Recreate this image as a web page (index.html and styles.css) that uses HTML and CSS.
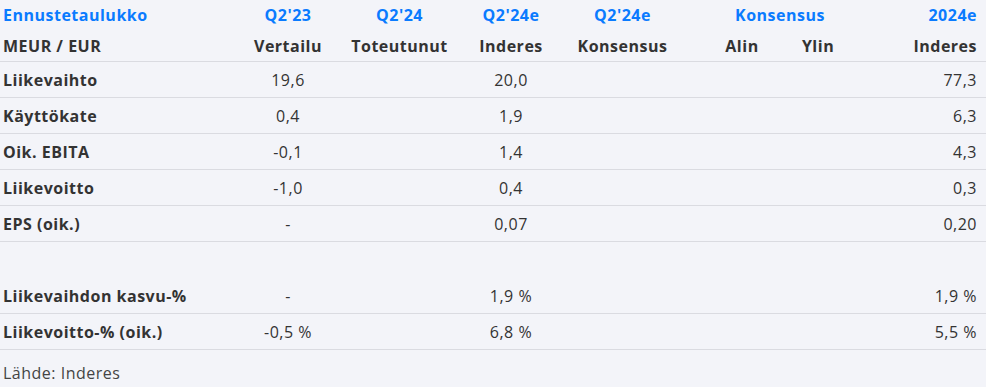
FILE: index.html
```html
<!DOCTYPE html>
<html lang="fi">
<head>
<meta charset="utf-8">
<link rel="stylesheet" href="styles.css">
</head>
<body>
<table class="fc">
  <colgroup>
    <col class="c-label"><col class="c-num"><col class="c-num2"><col class="c-num"><col class="c-num2"><col class="c-gap"><col class="c-cons"><col class="c-cons"><col class="c-last">
  </colgroup>
  <thead>
    <tr class="h1">
      <th class="lbl">Ennustetaulukko</th>
      <th>Q2'23</th>
      <th>Q2'24</th>
      <th>Q2'24e</th>
      <th>Q2'24e</th>
      <th></th>
      <th colspan="2">Konsensus</th>
      <th class="last">2024e</th>
    </tr>
    <tr class="h2">
      <th class="lbl">MEUR / EUR</th>
      <th>Vertailu</th>
      <th>Toteutunut</th>
      <th>Inderes</th>
      <th>Konsensus</th>
      <th></th>
      <th>Alin</th>
      <th>Ylin</th>
      <th class="last">Inderes</th>
    </tr>
  </thead>
  <tbody>
    <tr><td class="lbl">Liikevaihto</td><td>19,6</td><td></td><td>20,0</td><td></td><td></td><td></td><td></td><td class="last">77,3</td></tr>
    <tr><td class="lbl">Käyttökate</td><td>0,4</td><td></td><td>1,9</td><td></td><td></td><td></td><td></td><td class="last">6,3</td></tr>
    <tr><td class="lbl">Oik. EBITA</td><td>-0,1</td><td></td><td>1,4</td><td></td><td></td><td></td><td></td><td class="last">4,3</td></tr>
    <tr><td class="lbl">Liikevoitto</td><td>-1,0</td><td></td><td>0,4</td><td></td><td></td><td></td><td></td><td class="last">0,3</td></tr>
    <tr><td class="lbl">EPS (oik.)</td><td>-</td><td></td><td>0,07</td><td></td><td></td><td></td><td></td><td class="last">0,20</td></tr>
    <tr class="spacer"><td colspan="9"></td></tr>
    <tr><td class="lbl">Liikevaihdon kasvu-%</td><td>-</td><td></td><td>1,9 %</td><td></td><td></td><td></td><td></td><td class="last">1,9 %</td></tr>
    <tr><td class="lbl">Liikevoitto-% (oik.)</td><td>-0,5 %</td><td></td><td>6,8 %</td><td></td><td></td><td></td><td></td><td class="last">5,5 %</td></tr>
  </tbody>
</table>
<p class="source">Lähde: Inderes</p>
</body>
</html>
```
FILE: styles.css
```css
html, body {
  margin: 0;
  padding: 0;
  background: #f3f4f9;
}
body {
  width: 986px;
  height: 387px;
  overflow: hidden;
  font-family: "Open Sans", "Liberation Sans", sans-serif;
  font-size: 16px;
  letter-spacing: 0.5px;
  color: #333333;
}
.fc {
  width: 986px;
  border-collapse: collapse;
  table-layout: fixed;
}
.c-label { width: 232px; }
.c-num { width: 112px; }
.c-num2 { width: 111px; }
.c-gap { width: 26px; }
.c-cons { width: 76px; }
.c-last { width: auto; }
.fc th, .fc td {
  padding: 0;
  text-align: center;
  white-space: nowrap;
  line-height: 20px;
}
.fc th {
  font-weight: 700;
}
.fc .lbl {
  text-align: left;
  padding-left: 3px;
  font-weight: 700;
}
.fc .last {
  text-align: right;
  padding-right: 9px;
}
.h1 th {
  color: #0a7bff;
  height: 30px;
  vertical-align: middle;
}
.h2 th {
  height: 31px;
  border-bottom: 1px solid #dadbe1;
}
.fc tbody td {
  height: 35px;
  border-bottom: 1px solid #dadbe1;
}
.fc tbody tr.spacer td {
  height: 36px;
  border-bottom: 0;
}
.source {
  margin: 0;
  padding: 13px 0 0 3px;
  font-size: 16px;
  line-height: 20px;
  color: #444;
}
```
